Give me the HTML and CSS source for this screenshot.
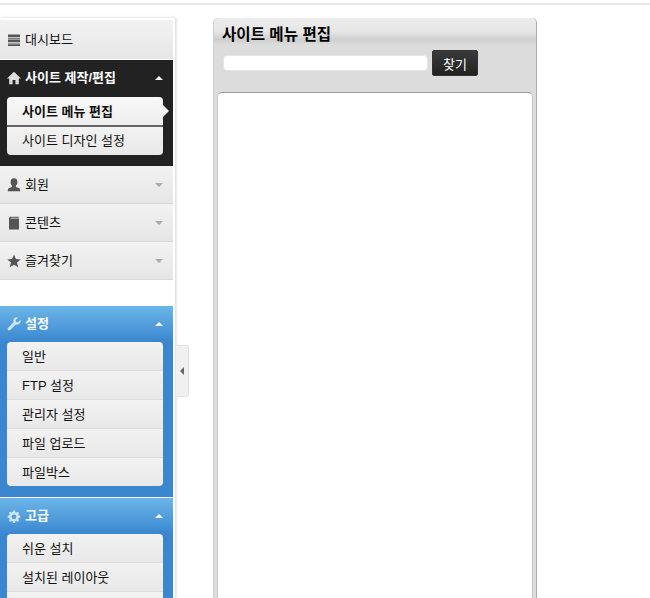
FILE: index.html
```html
<!DOCTYPE html>
<html lang="ko">
<head>
<meta charset="utf-8">
<title>사이트 메뉴 편집</title>
<link rel="stylesheet" href="styles.css">
</head>
<body>
<div class="topline"></div>
<div class="page">
  <nav class="sidebar">
    <div class="item first">
      <svg class="ico" viewBox="0 0 14 14"><path fill="#555" d="M1 1.500h12v2.400H1zM1 4.800h12v.9H1zM1 6.500h12v2.400H1zM1 9.700h12v.9H1zM1 11.300h12v1.700H1z"/></svg>
      <span class="label">대시보드</span>
    </div>
    <section class="group dark">
      <div class="ghead">
        <svg class="ico" viewBox="0 0 14 14"><path fill="#ddd" d="M7 .8 0 7.500h2.200V13.200h3.400V9h2.800v4.200h3.400V7.500H14z"/></svg>
        <span class="label">사이트 제작/편집</span>
        <i class="caret up"></i>
      </div>
      <ul class="sub">
        <li class="active">사이트 메뉴 편집</li>
        <li>사이트 디자인 설정</li>
      </ul>
    </section>
    <div class="item">
      <svg class="ico" viewBox="0 0 14 14"><path fill="#555" d="M7 .2c2.300 0 3.400 1.700 3.400 3.800 0 1.600-.6 3-1.500 3.800v1.300c1.900.5 4.300 1.200 4.300 3v1.100H.8v-1.100c0-1.800 2.400-2.500 4.300-3V7.800C4.200 7 3.600 5.600 3.600 4 3.600 1.900 4.700.2 7 .2z"/></svg>
      <span class="label">회원</span>
      <i class="caret down"></i>
    </div>
    <div class="item">
      <svg class="ico" viewBox="0 0 14 14"><path fill="#555" d="M3 .8h9v1H3.600v.8H12V13.500H2V1.800z"/></svg>
      <span class="label">콘텐츠</span>
      <i class="caret down"></i>
    </div>
    <div class="item">
      <svg class="ico" viewBox="0 0 14 14"><path fill="#555" d="M7 .6l1.900 4.400 4.800.4-3.700 3.100 1.200 4.700L7 10.700 2.800 13.200 4 8.500.3 5.400l4.800-.4z"/></svg>
      <span class="label">즐겨찾기</span>
      <i class="caret down"></i>
    </div>
    <section class="group blue settings">
      <div class="ghead">
        <svg class="ico" viewBox="0 0 14 14"><path fill="#cfe4f6" d="M13.500 2.800 11 5.300 9 4.900 8.600 3 11.100.5C9 -.2 6.800 1.200 6.400 3.300c-.1.700 0 1.400.2 2L1 10.900c-.7.700-.7 1.600 0 2.200s1.500.7 2.200 0L8.800 7.500c2.800.8 5.700-1.700 4.700-4.700z"/></svg>
        <span class="label">설정</span>
        <i class="caret up"></i>
      </div>
      <ul class="sub">
        <li>일반</li>
        <li>FTP 설정</li>
        <li>관리자 설정</li>
        <li>파일 업로드</li>
        <li>파일박스</li>
      </ul>
    </section>
    <section class="group blue">
      <div class="ghead">
        <svg class="ico" viewBox="0 0 14 14"><path fill="#cfe4f6" fill-rule="evenodd" d="M6 1.500h2l.3 1.500 1.100.5 1.300-.8 1.400 1.400-.8 1.300.5 1.100 1.500.3v2l-1.500.3-.5 1.100.8 1.300-1.400 1.400-1.300-.8-1.100.5-.3 1.300H6l-.3-1.300-1.100-.5-1.300.8-1.400-1.400.8-1.300-.5-1.100L.7 8.800v-2l1.500-.3.500-1.100-.8-1.300 1.400-1.400 1.300.8 1.100-.5zM7 5.400a2.400 2.400 0 1 0 0 4.800 2.400 2.400 0 0 0 0-4.800z"/></svg>
        <span class="label">고급</span>
        <i class="caret up"></i>
      </div>
      <ul class="sub">
        <li>쉬운 설치</li>
        <li>설치된 레이아웃</li>
        <li>&nbsp;</li>
      </ul>
    </section>
  </nav>
  <button class="collapse" aria-label="접기"><i class="caret left"></i></button>
  <main class="panel">
    <h1 class="ptitle">사이트 메뉴 편집</h1>
    <form class="search">
      <input class="sinput" type="text">
      <button class="sbtn" type="button">찾기</button>
    </form>
    <div class="tree"></div>
  </main>
</div>
</body>
</html>
```

FILE: styles.css
```css
* { box-sizing: border-box; }
html, body { margin: 0; height: 598px; overflow: hidden; background: #fff; }
body { font-family: "Liberation Sans", "Noto Sans CJK KR", sans-serif; font-size: 13px; color: #111; }
.topline { height: 5px; border-bottom: 2px solid #e6e6e6; }
.page { position: relative; display: flex; align-items: flex-start; padding-top: 13px; height: 593px; overflow: hidden; }
.sidebar {
  width: 175px; flex: none; padding: 2px 2px 0 0; background: #fff;
  box-shadow: 1px 0 3px rgba(0,0,0,.18); height: 700px;
}
.item {
  display: flex; align-items: center; height: 38px; padding: 0 8px 0 7px;
  background: linear-gradient(#f2f2f2, #e6e6e6); border-bottom: 1px solid #d8d8d8;
}
.item.first { height: 39px; margin-bottom: 1px; border-bottom: 0; }
.ico { width: 14px; height: 14px; flex: none; margin-right: 4px; }
.label { flex: 1; font-size: 13px; line-height: 16px; }
.caret { display: block; width: 0; height: 0; border-style: solid; flex: none; margin-right: 2px; }
.caret.up { border-width: 0 4px 4px; border-color: transparent transparent #fff; }
.caret.down { border-width: 4px 4px 0; border-color: #aaa transparent transparent; }
.caret.left { border-width: 4px 4px 4px 0; border-color: transparent #666 transparent transparent; margin: 0; }
.group { padding-bottom: 11px; }
.group.dark { background: #222; height: 106px; }
.group.dark .sub { margin-top: 1px; }
.group.dark .sub li { padding-top: 0; }
.group.blue { background: linear-gradient(#6cb6e8, #3a87d0 36px); margin-bottom: 1px; }
.settings { margin-top: 26px; }
.ghead { display: flex; align-items: center; height: 36px; padding: 0 8px 0 7px; }
.ghead .label { color: #fff; font-weight: bold; }
.sub { list-style: none; margin: 0 10px 0 7px; padding: 0; border-radius: 4px; }
.sub li {
  height: 29px; padding: 1px 0 0 15px; line-height: 27px; font-size: 13px; color: #111;
  background: linear-gradient(#f2f2f2, #e8e8e8); border-bottom: 1px solid #dcdcdc;
}
.group.dark .sub li { line-height: 28px; }
.sub li:first-child { border-radius: 4px 4px 0 0; }
.sub li:last-child { border-radius: 0 0 4px 4px; border-bottom: 0; height: 28px; }
.group.dark .sub li.active {
  position: relative; font-weight: bold; border-bottom: 2px solid #666; height: 30px; line-height: 29px;
  background: linear-gradient(#f8f8f8, #eee);
}
.sub li.active::after {
  content: ""; position: absolute; left: 100%; top: 8px; width: 0; height: 0;
  border-style: solid; border-width: 6px 0 6px 6px; border-color: transparent transparent transparent #f4f4f4;
}
.collapse {
  position: absolute; left: 176px; top: 340px; width: 13px; height: 52px; padding: 0 1px 0 0;
  display: flex; align-items: center; justify-content: center;
  background: #f0f0f0; border: 1px solid #e2e2e2; border-left: 0; border-radius: 0 3px 3px 0;
}
.panel {
  width: 324px; margin: 0 0 0 38px; height: 620px; padding: 0 3px;
  background: #dcdcdc; border-radius: 5px 5px 0 0; border-right: 1px solid #aaa; border-left: 1px solid #ccc;
}
.ptitle {
  margin: 0 -3px; height: 27px; padding: 7px 0 0 8px; font-size: 15.6px; line-height: 20px; font-weight: bold; color: #000;
  background: linear-gradient(#ececec, #e6e6e6 50%, #cfcfcf 80%, #dcdcdc); border-radius: 5px 5px 0 0;
}
.search { display: flex; align-items: center; gap: 4px; padding: 5px 0 0 6px; }
.sinput { width: 205px; height: 16px; border: 1px solid #e4e4e4; border-radius: 4px; background: #fff; padding: 0; }
.sbtn {
  width: 46px; height: 26px; padding: 0; border: 1px solid #333; border-radius: 2px;
  font-family: inherit; font-size: 13px; color: #fff; background: linear-gradient(#3a3a3a, #222);
}
.tree { height: 520px; margin-top: 16px; background: #fff; border: 1px solid #c8c8c8; border-top-color: #999; border-radius: 5px 5px 0 0; }
```
